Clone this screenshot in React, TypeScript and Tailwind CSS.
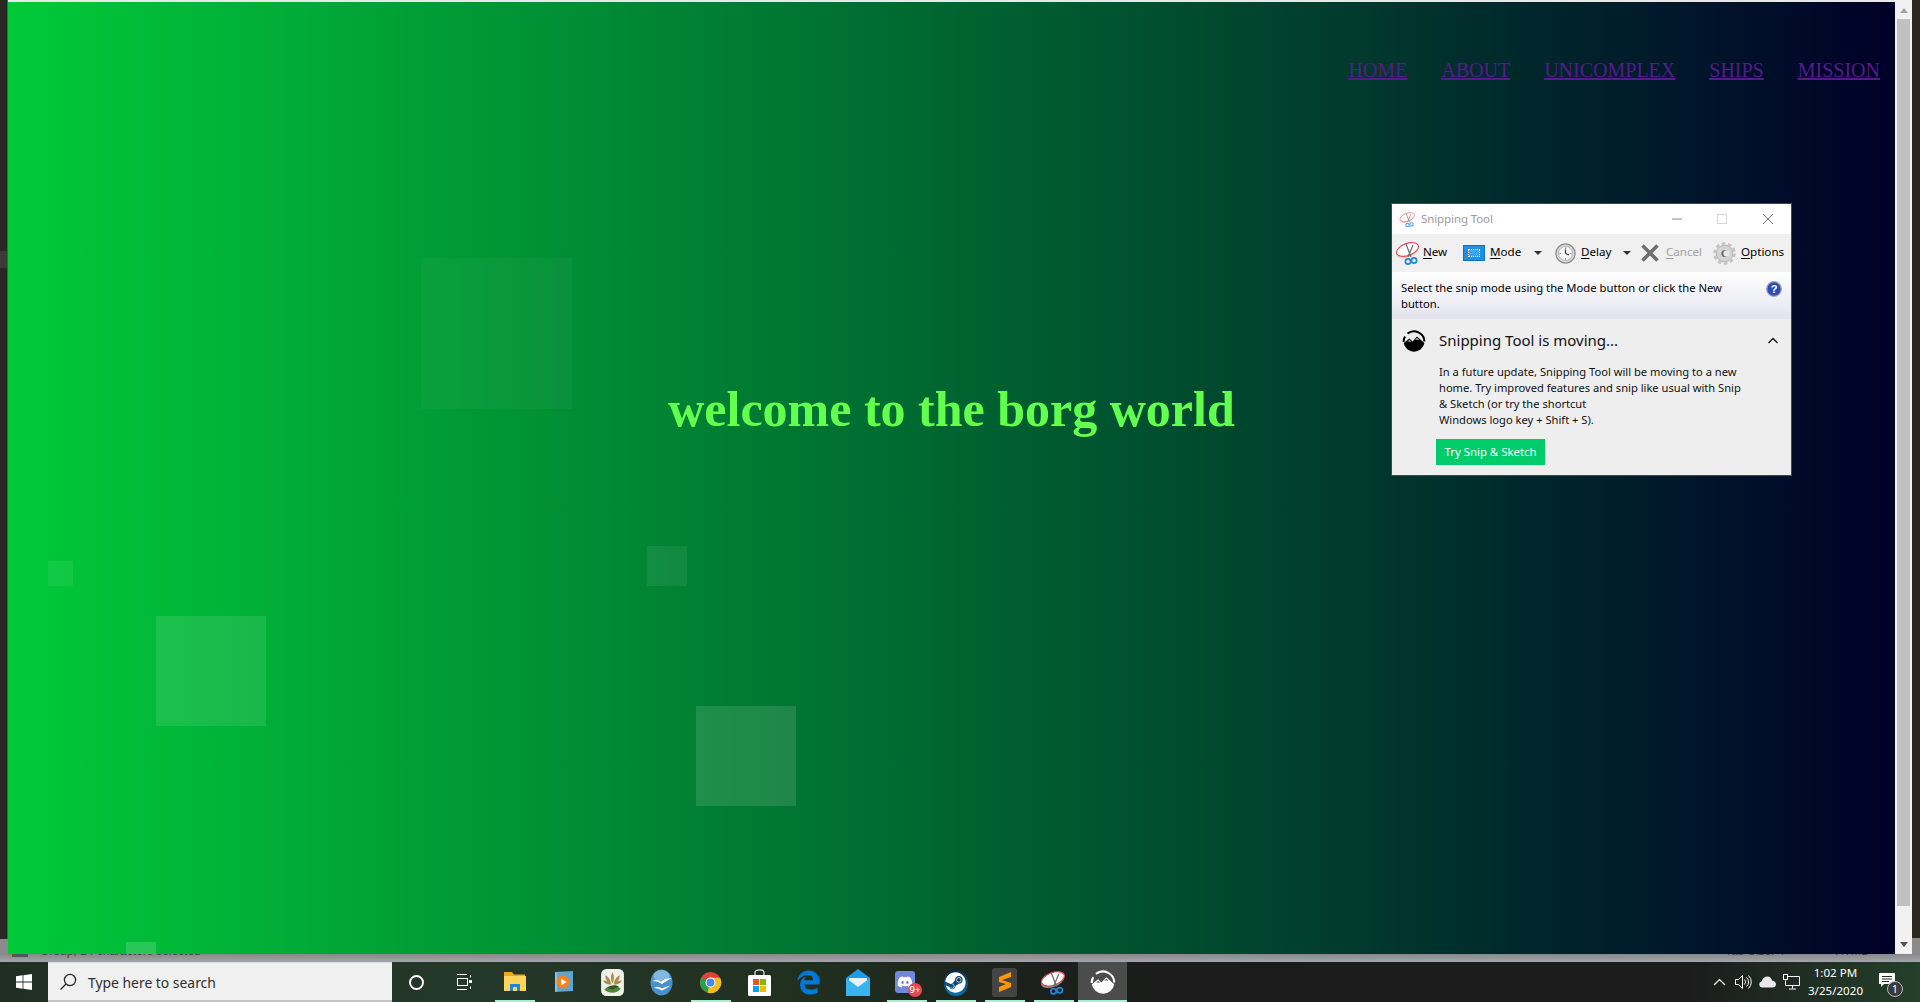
import React from "react";
import { FaDiscord, FaSteam } from "react-icons/fa";
import { FaEdgeLegacy } from "react-icons/fa6";

const UI = { fontFamily: '"Noto Sans", "Open Sans", sans-serif' };

function Scissors({ size = 26, faded = false, shade = "#f4c9ca" }: { size?: number; faded?: boolean; shade?: string }) {
  return (
    <svg width={size} height={size} viewBox="0 0 26 26" fill="none" style={{ opacity: faded ? 0.75 : 1 }}>
      <ellipse cx="12" cy="11.5" rx="11.5" ry="6" transform="rotate(-20 12 11.5)" fill={shade} />
      <ellipse cx="12.5" cy="9.5" rx="11.5" ry="6" transform="rotate(-20 12.5 9.5)" fill="#fff" stroke="#e8474e" strokeWidth="1.1" />
      <path d="M11 4 L16 17 M18 5 L13 17" stroke="#6a6a6a" strokeWidth="1.2" />
      <circle cx="13" cy="21.5" r="2.6" stroke="#1e88d8" strokeWidth="1.7" />
      <circle cx="19" cy="20.5" r="2.6" stroke="#1e88d8" strokeWidth="1.7" />
    </svg>
  );
}

function SketchLogo({ size = 24, color = "#000", cut = "#eee" }: { size?: number; color?: string; cut?: string }) {
  return (
    <svg width={size} height={size} viewBox="0 0 24 24" fill="none">
      <path d="M5.5 4.5 A10.5 10.5 0 0 1 22.4 12.5" stroke={color} strokeWidth="2" />
      <path d="M1.7 14 L7.5 9.5 L10.5 12.5 L15 7.5 L22.4 14 A10.5 10.5 0 0 1 1.7 14 Z" fill={color} />
      <path d="M1.6 13 A10.5 10.5 0 0 1 3 7.5" stroke={color} strokeWidth="2" />
      <path d="M5.8 12.5 L7.5 11 L9.3 13 L7.5 12.4 Z M13 11 L15 9 L17.3 11.2 L15 10.4 Z" fill={cut} />
    </svg>
  );
}

function Caret() {
  return <span className="block w-0 h-0 border-x-[4.5px] border-x-transparent border-t-[4.5px] border-t-[#333]" />;
}

function ToolLabel({ u, rest, muted = false }: { u: string; rest: string; muted?: boolean }) {
  return (
    <span className={`block pb-[2px] text-[11.6px] leading-none ${muted ? "text-[#a0a0a0]" : "text-black"}`}>
      <span className="underline underline-offset-2">{u}</span>
      {rest}
    </span>
  );
}

function SnipWindow() {
  return (
    <div style={UI} className="absolute left-[1391px] top-[203px] w-[401px] h-[273px] border border-[#3c4a4a] flex flex-col bg-[#eeeeee]">
      <div className="h-[30px] bg-white flex items-center shrink-0">
        <span className="ml-[7px] flex"><Scissors size={17} faded /></span>
        <span className="ml-[5px] text-[11.5px] text-[#9a9a9a] tracking-[-0.1px]">Snipping Tool</span>
        <svg className="ml-[178px]" width="12" height="12" viewBox="0 0 12 12"><path d="M1 6H11" stroke="#888" /></svg>
        <svg className="ml-[33px]" width="12" height="12" viewBox="0 0 12 12"><rect x="1.5" y="1.5" width="9" height="9" fill="none" stroke="#d8d8d8" /></svg>
        <svg className="ml-[34px]" width="12" height="12" viewBox="0 0 12 12"><path d="M1 1L11 11M11 1L1 11" stroke="#777" /></svg>
      </div>
      <div className="h-[38px] bg-[#f0f0f0] flex items-center shrink-0">
        <span className="ml-[3px] flex"><Scissors size={26} /></span>
        <span className="ml-[2px] w-[31px]"><ToolLabel u="N" rest="ew" /></span>
        <span className="ml-[9px] w-[22px] h-[16px] bg-[#1e90e6] border border-[#0f6fc0] flex items-center justify-center">
          <span className="w-[12px] h-[8px] border border-dotted border-white bg-[#3da5ef]" />
        </span>
        <span className="ml-[5px] w-[36px]"><ToolLabel u="M" rest="ode" /></span>
        <span className="ml-[8px] flex"><Caret /></span>
        <svg className="ml-[13px]" width="21" height="21" viewBox="0 0 21 21">
          <circle cx="10.5" cy="10.5" r="9.6" fill="#d8d8d8" stroke="#8a8a8a" strokeWidth="1.2" />
          <circle cx="10.5" cy="10.5" r="7" fill="#f6f6f6" stroke="#aaa" strokeWidth=".8" />
          <path d="M10.5 4.5V6M10.5 15V16.5M4.5 10.5H6M15 10.5H16.5" stroke="#777" strokeWidth=".9" />
          <path d="M10.5 10.5L10.5 6.5M10.5 10.5L14 12" stroke="#333" strokeWidth="1.2" />
        </svg>
        <span className="ml-[5px] w-[38px]"><ToolLabel u="D" rest="elay" /></span>
        <span className="ml-[4px] flex"><Caret /></span>
        <svg className="ml-[9px]" width="20" height="20" viewBox="0 0 20 20"><path d="M2.5 2.5L17.5 17.5M17.5 2.5L2.5 17.5" stroke="#6f6f6f" strokeWidth="3.6" /></svg>
        <span className="ml-[6px] w-[42px]"><ToolLabel u="C" rest="ancel" muted /></span>
        <svg className="ml-[5px]" width="23" height="23" viewBox="0 0 23 23">
          <circle cx="11.5" cy="11.5" r="8.3" fill="#d4d4d4" stroke="#b0b0b0" />
          <circle cx="11.5" cy="11.5" r="10" fill="none" stroke="#c4c4c4" strokeWidth="2.6" strokeDasharray="3.6 2.7" />
          <circle cx="12" cy="11.5" r="3.6" fill="#666" />
          <circle cx="13.6" cy="11.5" r="3.2" fill="#e6e6e6" />
        </svg>
        <span className="ml-[5px]"><ToolLabel u="O" rest="ptions" /></span>
      </div>
      <div className="h-[47px] shrink-0 bg-[linear-gradient(to_bottom,#ffffff,#e3e3ef)] relative pl-[9px] pt-[8px] text-[11.25px] leading-[16px] text-black">
        <div>Select the snip mode using the Mode button or click the New</div>
        <div>button.</div>
        <svg className="absolute left-[374px] top-[9px]" width="16" height="16" viewBox="0 0 16 16">
          <circle cx="8" cy="8" r="7.3" fill="#2f4fb0" stroke="#9aa3b8" strokeWidth="1.3" />
          <text x="8" y="12" textAnchor="middle" fontSize="11" fontWeight="700" fill="#fff" fontFamily="Liberation Sans, sans-serif">?</text>
        </svg>
      </div>
      <div className="flex-1 flex flex-col bg-[#eeeeee]">
        <div className="flex items-center h-[44px] shrink-0">
          <span className="ml-[10px] flex"><SketchLogo /></span>
          <span className="ml-[13px] pb-[2px] text-[15px] text-[#111] w-[328px]">Snipping Tool is moving...</span>
          <svg width="12" height="12" viewBox="0 0 12 12" fill="none"><path d="M1.5 8L6 3.5L10.5 8" stroke="#111" strokeWidth="1.3" /></svg>
        </div>
        <div className="pl-[47px] pt-[1px] text-[11.15px] leading-[16px] text-[#111]">
          <div>In a future update, Snipping Tool will be moving to a new</div>
          <div>home. Try improved features and snip like usual with Snip</div>
          <div>&amp; Sketch (or try the shortcut</div>
          <div>Windows logo key + Shift + S).</div>
        </div>
        <div className="ml-[44px] mt-[11px] w-[109px] h-[26px] bg-[#00cc6a] text-white text-[11.4px] flex items-center justify-center">
          Try Snip &amp; Sketch
        </div>
      </div>
    </div>
  );
}

function Slot({ children, mark, active }: { children?: React.ReactNode; mark?: boolean; active?: boolean }) {
  return (
    <div className={`relative w-[49px] h-full flex items-center justify-center shrink-0 ${active ? "bg-[#4c4c4c]" : ""}`}>
      {children}
      {mark && <span className={`absolute bottom-0 h-[2px] bg-[#a8efd2] ${active ? "left-0 right-0" : "left-[5px] right-[4px]"}`} />}
    </div>
  );
}

function Chrome() {
  return (
    <svg width="23" height="27" viewBox="0 0 24 24">
      <circle cx="12" cy="12" r="11" fill="#db4437" />
      <path d="M12 12 L2.5 6.5 A11 11 0 0 0 9 22.6 Z" fill="#2d9e4a" />
      <path d="M12 7 H22 A11 11 0 0 1 9 22.6 Z" fill="#f2bd23" />
      <circle cx="12" cy="12" r="5.2" fill="#fff" />
      <circle cx="12" cy="12" r="4.1" fill="#4a8af0" />
    </svg>
  );
}

function Taskbar() {
  return (
    <div style={UI} className="h-[40px] shrink-0 flex items-stretch bg-[linear-gradient(to_right,#1f3023,#24382a_25%,#20301f_42%,#1c1f1c_55%,#1b1b1b_65%,#1c1c1c_88%,#23402a_100%)] text-white">
      <div className="w-[48px] flex items-center justify-center shrink-0">
        <svg width="16" height="16" viewBox="0 0 16 16" fill="#fff">
          <path d="M0 2.3L6.6 1.3V7.6H0Z M7.4 1.2L16 0V7.6H7.4Z M0 8.4H6.6V14.7L0 13.7Z M7.4 8.4H16V16L7.4 14.8Z" />
        </svg>
      </div>
      <div className="w-[344px] shrink-0 bg-[#f0f0f0] border-t border-t-[#dcdcdc] border-b-2 border-b-[#c4c4c4] flex items-center">
        <svg className="ml-[11px]" width="18" height="18" viewBox="0 0 18 18" fill="none">
          <circle cx="11" cy="7" r="5.6" stroke="#222" strokeWidth="1.2" />
          <path d="M7 11L1.5 16.5" stroke="#222" strokeWidth="1.3" />
        </svg>
        <span className="ml-[11px] pt-[3px] text-[13.9px] text-[#2e2e2e]">Type here to search</span>
      </div>
      <Slot><span className="w-[15px] h-[15px] rounded-full border-2 border-white" /></Slot>
      <Slot>
        <svg className="-ml-[3px]" width="16" height="16" viewBox="0 0 16 16" fill="none" stroke="#fff">
          <path d="M1 .5H11M1 15.5H11" />
          <rect x="1.5" y="4.5" width="10" height="7" />
          <path d="M14.5 1V3.5M14.5 12.5V15" />
          <rect x="13" y="6" width="3" height="3" fill="#fff" stroke="none" />
        </svg>
      </Slot>
      <Slot mark>
        <svg width="22" height="22" viewBox="0 0 22 22">
          <path d="M0 1H8L10 3.5H21V8H0Z" fill="#e8a920" />
          <rect x="0" y="5" width="22" height="15" fill="#ffd45c" />
          <path d="M6 20V13H16V20H13V16H9V20Z" fill="#1c87d8" />
        </svg>
      </Slot>
      <Slot>
        <svg width="20" height="22" viewBox="0 0 20 22">
          <path d="M1 1L19 0V20L1 21Z" fill="#5fa5d0" />
          <path d="M1 1L3 2V20L1 21Z" fill="#8cc3e2" />
          <circle cx="9" cy="11" r="6.5" fill="#f58220" />
          <path d="M7 7.5L12.5 11L7 14.5Z" fill="#fff" />
        </svg>
      </Slot>
      <Slot>
        <svg width="23" height="27" viewBox="0 0 22 26">
          <rect x="0" y="0" width="22" height="26" rx="5" fill="#f0f0ea" />
          <path d="M11 3C9 7 9 10 11 14C13 10 13 7 11 3ZM4 6C4 11 7 13 10 14.5C9 11 8 8 4 6ZM18 6C14 8 13 11 12 14.5C15 13 18 11 18 6ZM2 11C3 14 7 15 10 15C8 13 6 11 2 11ZM20 11C16 11 14 13 12 15C15 15 19 14 20 11Z" fill="#a88c4e" />
          <path d="M3 20C7 15 15 15 19 19C15 24 8 24 3 20Z" fill="#4d8a35" />
          <path d="M6 18C10 15 14 15 17 17L11 20Z" fill="#33591f" />
        </svg>
      </Slot>
      <Slot>
        <svg width="23" height="27" viewBox="0 0 23 27">
          <ellipse cx="11.5" cy="13.5" rx="11" ry="13" fill="#4a90cc" />
          <ellipse cx="11.5" cy="7" rx="8" ry="6" fill="#82b8e2" />
          <path d="M2 12C6 10 9 11 11 13C14 10 18 9 22 9C18 11 15 13 12 15C9 13 6 12 2 12Z" fill="#fff" />
          <path d="M4 19C8 17 10 18 12 19.5C15 18 18 17 20 17C17 19 15 20 12 21.5C9 20 7 19 4 19Z" fill="#fff" />
        </svg>
      </Slot>
      <Slot mark><Chrome /></Slot>
      <Slot>
        <svg width="23" height="28" viewBox="0 0 23 28">
          <path d="M7 8V4.5C7 1 16 1 16 4.5V8" fill="none" stroke="#ddd" strokeWidth="1.3" />
          <rect x="0" y="7" width="23" height="21" rx="1.5" fill="#fff" />
          <rect x="5" y="11" width="6" height="6" fill="#f25022" />
          <rect x="12" y="11" width="6" height="6" fill="#7fba00" />
          <rect x="5" y="18" width="6" height="6" fill="#00a4ef" />
          <rect x="12" y="18" width="6" height="6" fill="#ffb900" />
        </svg>
      </Slot>
      <Slot><FaEdgeLegacy size={25} color="#0078d7" /></Slot>
      <Slot>
        <svg width="24" height="27" viewBox="0 0 24 27">
          <path d="M0 9L12 0L24 9V27H0Z" fill="#1e9be8" />
          <path d="M3 9H21V13L12 19L3 13Z" fill="#e8f2fb" />
          <path d="M0 9L12 18L24 9V27H0Z" fill="#39b4f2" />
        </svg>
      </Slot>
      <Slot mark>
        <span className="relative w-[20px] h-[22px] -ml-[3px] rounded-[3px] bg-[#7288d8] flex items-center justify-center">
          <FaDiscord size={16} color="#fff" />
          <span className="absolute -right-[7px] -bottom-[4px] w-[14px] h-[14px] rounded-full bg-[#e8484f] text-[9.5px] leading-[14px] text-center font-medium">9+</span>
        </span>
      </Slot>
      <Slot mark>
        <span className="w-[24px] h-[27px] rounded-full bg-[linear-gradient(to_bottom,#10233f,#0f6fb0)] flex items-center justify-center">
          <FaSteam size={21} color="#fff" />
        </span>
      </Slot>
      <Slot mark>
        <span className="w-[25px] h-[29px] rounded-[3px] bg-[#444444] flex items-center justify-center">
          <svg width="14" height="20" viewBox="0 0 14 20"><path d="M13 0V5L1 9V5ZM1 7L13 11V15L1 20V15L8 12L1 10Z" fill="#ff9800" /></svg>
        </span>
      </Slot>
      <Slot mark><Scissors size={27} shade="#8a8a8a" /></Slot>
      <Slot mark active><SketchLogo size={26} color="#fff" cut="#4c4c4c" /></Slot>

      <div className="ml-auto flex items-center shrink-0">
        <span className="w-[24px] flex justify-center">
          <svg width="13" height="8" viewBox="0 0 13 8" fill="none"><path d="M1 7L6.5 1.5L12 7" stroke="#fff" strokeWidth="1.2" /></svg>
        </span>
        <span className="w-[24px] flex justify-center">
          <svg width="17" height="16" viewBox="0 0 17 16" fill="none" stroke="#fff">
            <path d="M.5 5.5H3.5L7.5 1.5V14.5L3.5 10.5H.5Z" />
            <path d="M9.5 5.5A3.5 3.5 0 0 1 9.5 10.5M11.5 3.5A6 6 0 0 1 11.5 12.5M13.5 1.5A9 9 0 0 1 13.5 14.5" />
          </svg>
        </span>
        <span className="w-[24px] flex justify-center">
          <svg width="17" height="12" viewBox="0 0 17 12"><path d="M3 11.5A3 3 0 0 1 2.5 5.6C3.5 2 6 .5 8.5.5C11 .5 12.5 2.5 13 4.5C15.5 4.6 17 6.5 17 8.2C17 10.2 15.5 11.5 13.5 11.5Z" fill="#e8e8e8" /></svg>
        </span>
        <span className="w-[24px] flex justify-center">
          <svg width="17" height="16" viewBox="0 0 17 16" fill="none" stroke="#fff">
            <path d="M4.5 2.5H16.5V11.5H2.5V6.5" />
            <rect x=".5" y=".5" width="4" height="5" />
            <path d="M9.5 11.5V14.5M6 15H13" />
          </svg>
        </span>
        <div className="w-[65px] text-center text-[11.6px] leading-[18px]">
          <div>1:02 PM</div>
          <div>3/25/2020</div>
        </div>
        <div className="w-[52px] pl-[11px] relative h-full flex items-center">
          <svg width="16" height="15" viewBox="0 0 16 15" className="-mt-[3px]"><path d="M0 0H16V11H5L2 14V11H0Z" fill="#fff" /><path d="M3 3.5H13M3 6H13M3 8.5H10" stroke="#1f2f22" /></svg>
          <span className="absolute left-[19px] top-[19px] w-[16px] h-[16px] rounded-full bg-[#3a3a3a] border border-[#bbb] text-[11px] leading-[14px] text-center">1</span>
        </div>
      </div>
    </div>
  );
}

const Sq = ({ c }: { c: string }) => <div className={`absolute bg-white ${c}`} />;

export default function App() {
  return (
    <div className="w-[1920px] h-[1002px] flex flex-col overflow-hidden relative bg-[#9a9ca2]">
      <div className="h-[954px] flex shrink-0">
        <div className="w-[8px] flex flex-col shrink-0">
          <div className="h-[251px] bg-[#282820] border-r border-r-[#55554f]" />
          <div className="h-[17px] bg-[#3c3a34] border-r border-r-[#55554f]" />
          <div className="h-[671px] bg-[#282820] border-r border-r-[#55554f]" />
          <div className="flex-1 bg-[#8a8a8a]" />
        </div>
        <main className="flex-1 relative bg-[linear-gradient(to_right,#00ca39,#000028)] border-t-2 border-t-[#e8e8e8]">
          <nav className="flex justify-end gap-[34px] pr-[15px] pt-[57px] text-[20px] leading-[23px] text-[#551a8b] underline" style={{ fontFamily: '"Liberation Serif", serif' }}>
            <a>HOME</a>
            <a>ABOUT</a>
            <a>UNICOMPLEX</a>
            <a>SHIPS</a>
            <a>MISSION</a>
          </nav>
          <h1 className="mt-[300px] text-center text-[50px] leading-[55px] font-bold text-[#62ff4f]" style={{ fontFamily: '"Liberation Serif", serif' }}>
            welcome to the borg world
          </h1>
          <Sq c="left-[413px] top-[256px] w-[151px] h-[151px] opacity-[0.035]" />
          <Sq c="left-[40px] top-[559px] w-[25px] h-[25px] opacity-[0.07]" />
          <Sq c="left-[148px] top-[614px] w-[110px] h-[110px] opacity-[0.1]" />
          <Sq c="left-[639px] top-[544px] w-[40px] h-[40px] opacity-[0.07]" />
          <Sq c="left-[688px] top-[704px] w-[100px] h-[100px] opacity-[0.12]" />
          <Sq c="left-[118px] top-[940px] w-[30px] h-[12px] opacity-[0.16]" />
        </main>
        <div className="w-[17px] shrink-0 bg-[#f1f1f1] flex flex-col items-center">
          <span className="mt-[8px] w-0 h-0 border-x-[4px] border-x-transparent border-b-[5px] border-b-[#a3a3a3]" />
          <span className="mt-[6px] w-[13px] h-[887px] bg-[#c1c1c1]" />
          <span className="mt-[36px] w-0 h-0 border-x-[4px] border-x-transparent border-t-[5px] border-t-[#505050]" />
        </div>
        <div className="w-[8px] shrink-0 flex flex-col">
          <div className="h-[938px] bg-[#282820]" />
          <div className="flex-1 bg-[#8a8a8a]" />
        </div>
      </div>
      <div className="h-[8px] shrink-0 bg-[linear-gradient(to_bottom,#888888,#a4a6ae)] flex overflow-hidden text-[12px] leading-[12px] text-[#444]" style={{ fontFamily: '"Liberation Sans", sans-serif' }}>
        <span className="ml-[12px] w-[16px] h-[3px] bg-[#555] shrink-0" />
        <span className="ml-[12px] -mt-[9px] w-[160px] shrink-0 whitespace-nowrap">Group, 14 characters selected</span>
        <span className="ml-[1525px] -mt-[9px] w-[60px] shrink-0 whitespace-nowrap">Tab Size: 4</span>
        <span className="ml-[50px] -mt-[9px] whitespace-nowrap">HTML</span>
      </div>
      <Taskbar />
      <SnipWindow />
    </div>
  );
}
